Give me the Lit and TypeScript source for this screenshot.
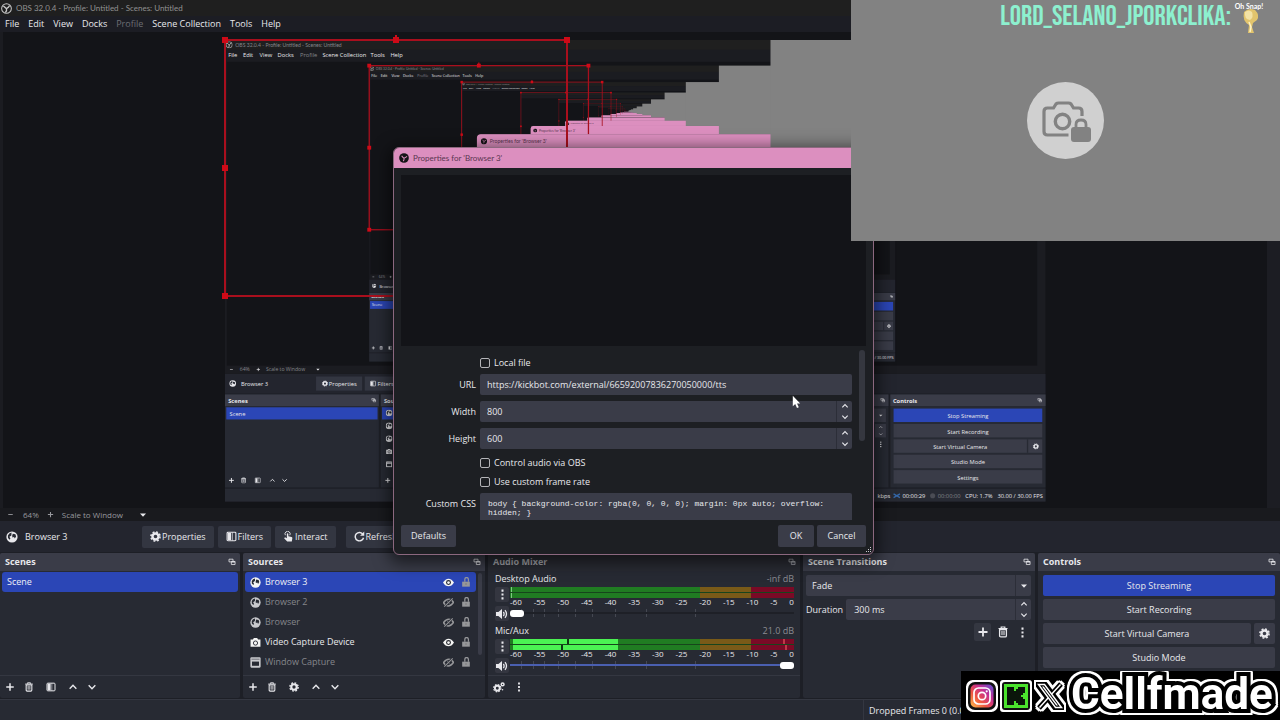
import { LitElement, html, svg, css, nothing } from "lit";
import { customElement } from "lit/decorators.js";
import { styleMap } from "lit/directives/style-map.js";

const glyphs = {
  plus: svg`<path d="M6 1.5v9M1.5 6h9" stroke="currentColor" stroke-width="1.8" fill="none"/>`,
  minus: svg`<path d="M3 6h6" stroke="currentColor" stroke-width="1.2"/>`,
  trash: svg`<path d="M1.5 2.5h9M4.2 2V1h3.6v1" stroke="currentColor" stroke-width="1.2" fill="none"/><path d="M2.6 3.5h6.8v6.2q0 1.2-1.2 1.2H3.8q-1.2 0-1.2-1.2z" fill="none" stroke="currentColor" stroke-width="1.3"/><path d="M4.8 4.8v4.4M6 4.8v4.4M7.2 4.8v4.4" stroke="currentColor" stroke-width=".8"/>`,
  gear: svg`<circle cx="6" cy="6" r="3.3" fill="none" stroke="currentColor" stroke-width="2.6"/><circle cx="6" cy="6" r="5" fill="none" stroke="currentColor" stroke-width="1.7" stroke-dasharray="2.1 1.83"/>`,
  gears: svg`<circle cx="4.3" cy="7.2" r="2.4" fill="none" stroke="currentColor" stroke-width="1.9"/><circle cx="4.3" cy="7.2" r="3.6" fill="none" stroke="currentColor" stroke-width="1.2" stroke-dasharray="1.6 1.23"/><circle cx="9.6" cy="3.4" r="1.4" fill="none" stroke="currentColor" stroke-width="1.5"/><circle cx="9.6" cy="8.8" r=".7" fill="currentColor"/>`,
  filter: svg`<rect x="1.2" y="1.4" width="9.6" height="9.2" rx="1" fill="none" stroke="currentColor" stroke-width="1.2"/><path d="M2 2h3.6v8H2z" fill="currentColor"/><path d="M7 1.5v9" stroke="currentColor" stroke-width=".7"/>`,
  up: svg`<path d="M2 8l4-4 4 4" fill="none" stroke="currentColor" stroke-width="1.7"/>`,
  down: svg`<path d="M2 4l4 4 4-4" fill="none" stroke="currentColor" stroke-width="1.7"/>`,
  caret: svg`<path d="M1.5 3.8h9L6 8.6z" fill="currentColor"/>`,
  dots: svg`<path d="M4.9 .6h2.2v2.4H4.9zM4.9 4.8h2.2v2.4H4.9zM4.9 9h2.2v2.4H4.9z" fill="currentColor"/>`,
  popout: svg`<path d="M1.5 1.8h6v4h-6z" fill="none" stroke="currentColor" stroke-width="1.2"/><path d="M5 5.2h5.6v4.6H5z" fill="#3a3c48" stroke="currentColor" stroke-width="1.2"/><path d="M5 5.8h5.6" stroke="currentColor" stroke-width="1.8"/>`,
  eye: svg`<path d="M0 6Q2.6 1.8 6 1.8T12 6Q9.4 10.2 6 10.2T0 6z" fill="currentColor"/><circle cx="6" cy="6" r="2.7" fill="#25272f"/><circle cx="6" cy="6" r="1.5" fill="currentColor"/>`,
  hidden: svg`<path d="M.6 6.2Q3 2.4 6.4 2.4T11.4 6Q9 9.8 5.8 9.8T.6 6.2z" fill="none" stroke="currentColor" stroke-width="1.7"/><circle cx="6" cy="6" r="1.6" fill="currentColor"/><path d="M1.4 11L10.6 1" stroke="#272a33" stroke-width="2.4"/><path d="M1.4 10.6L10.6 1.4" stroke="currentColor" stroke-width="1.1"/>`,
  unlock: svg`<path d="M1.4 5.6h9.2v6H1.4z" fill="currentColor"/><path d="M4.6 5.6V3Q4.6.6 6.7.6T8.9 3v2.6" fill="none" stroke="currentColor" stroke-width="1.5"/><circle cx="6" cy="8.4" r=".9" fill="#777"/>`,
  globe: svg`<circle cx="6" cy="6" r="5.6" fill="currentColor"/><path d="M5.5 1.6Q3 2 1.9 4.4L2 7l1.7 1.8.7-1.4L3.4 5.8l2-1.4zM6.8 2.8l2.6.4.7 2.2-1.3 2.2-.8-1.6-1.6.6-.2-2z" fill="#272a33"/>`,
  camera: svg`<path d="M.6 2.8h2.6L4.2 1.2h3.6l1 1.6h2.6v7.8H.6z" fill="currentColor"/><circle cx="6" cy="6.6" r="2.3" fill="none" stroke="#272a33" stroke-width="1"/>`,
  window: svg`<rect x=".4" y=".4" width="11.2" height="11.2" rx="1.2" fill="currentColor"/><path d="M2.2 5h7.600v4.6H2.2z" fill="#272a33"/><path d="M1.600 2.400h8.800" stroke="#272a33" stroke-width=".6"/>`,
  touch: svg`<path d="M4.6 11.4L1.2 7.8l1-1 2 1V3.4q0-1 .8-1t.8 1v2.4l3.6.8q1 .3.8 1.4l-.6 3.4z" fill="currentColor"/><path d="M2.6 4.6A2.8 2.8 0 1 1 7.4 4.6" fill="none" stroke="currentColor" stroke-width="1"/>`,
  refresh: svg`<path d="M9.8 3.6A4.6 4.6 0 1 0 10.4 7.4" fill="none" stroke="currentColor" stroke-width="1.6"/><path d="M11.2.6v4.6H6.6z" fill="currentColor"/>`,
  speaker: svg`<path d="M0 4h2.4L6 1v10L2.4 8H0z" fill="currentColor"/><path d="M7.4 3.8Q8.8 6 7.4 8.2M9 2.2Q12 6 9 9.8" fill="none" stroke="currentColor" stroke-width="1.3"/>`,
};
type Glyph = keyof typeof glyphs;

const icon = (name: Glyph, size = 10) =>
  html`<svg class="icon" width=${size} height=${size} viewBox="0 0 12 12" aria-hidden="true">${glyphs[name]}</svg>`;

const ringMark = svg`
  <circle cx="6" cy="6" r="5.3" fill="none" stroke="#c8c8c8" stroke-width="1.1"/>
  <path d="M6 6.2Q4.2 4.6 2.6 3.2M6 6.2Q8.4 5 9.4 2.8M6 6.2Q6.6 8.4 4.8 10.4" fill="none" stroke="#c8c8c8" stroke-width="1.5"/>`;
const solidMark = svg`
  <circle cx="6" cy="6" r="5.8" fill="#141416"/>
  <path d="M6 6.2Q4.200 5.200 3.200 3.200M6 6.200Q8.200 5.400 9.600 4M6 6.200Q6.400 8.400 5 9.800" fill="none" stroke="#d98fbd" stroke-width="1.3"/>`;

/** Recursive capture of the desktop shown in the main preview. */
@customElement("scene-preview")
class ScenePreview extends LitElement {
  static styles = css`
    :host { display: block; min-height: 0; background: #131418; }
    .canvas { display: block; width: 100%; height: 100%; }
    .ui { font-family: "Open Sans", "Noto Sans", sans-serif; font-size: 9px; fill: #e8e8ec; }
    .title { font-family: Lato, sans-serif; font-size: 8px; }
    .bold { font-weight: 700; }
    .small { font-size: 8px; }
    .dim { fill: #85868b; }
    .onpink { fill: #5a3650; }
    .mid { text-anchor: middle; }
  `;

  place(name: Glyph, x: number, y: number, s = 10) {
    return svg`<svg x=${x - s / 2} y=${y - s / 2} width=${s} height=${s} viewBox="0 0 12 12" color="#e8e8ec">${glyphs[name]}</svg>`;
  }

  selection() {
    const handles = [[225, 40], [396, 40], [567, 40], [225, 168], [225, 296], [396, 296]];
    return svg`<rect x="225" y="40" width="342" height="256" fill="none" stroke="#a90f1d" stroke-width="2"/>
      <path d="M396 40v-5" stroke="#c8101c" stroke-width="2"/>
      ${handles.map(([x, y]) => svg`<rect x=${x - 3} y=${y - 3} width="6" height="6" fill="#cf0a17"/>`)}`;
  }

  desktop(depth: number): unknown {
    const menu: [string, number][] = [["File", 5], ["Edit", 28], ["View", 54], ["Docks", 82], ["Profile", 117], ["Scene Collection", 152], ["Tools", 227], ["Help", 258]];
    const docks: [number, number][] = [[0, 240], [243, 242], [488, 312], [803, 232], [1038, 242]];
    const detailed = depth < 4;
    return svg`
      <rect width="1280" height="720" fill="#1b1c21"/>
      <rect width="1280" height="15" fill="#1f1f1f"/>
      ${detailed ? svg`<svg x="1" y="2" width="11" height="11" viewBox="0 0 12 12">${ringMark}</svg>
      <text class="dim title" x="16" y="11">OBS 32.0.4 - Profile: Untitled - Scenes: Untitled</text>
      ${menu.map(([t, x]) => svg`<text class=${t === "Profile" ? "dim" : ""} x=${x} y="27">${t}</text>`)}` : nothing}
      <rect x="3" y="34" width="1264" height="474" fill="#131418"/>
      ${this.nested(depth + 1)}
      ${this.selection()}
      <rect y="521" width="1280" height="31" fill="#23252e"/>
      <rect y="552" width="1280" height="168" fill="#1d1f26"/>
      ${docks.map(([x, w]) => svg`<rect x=${x} y="553" width=${w} height="145" fill="#272a33"/><rect x=${x} y="553" width=${w} height="18" fill="#3a3c48"/>`)}
      <rect y="700" width="1280" height="20" fill="#272a33"/>
      <rect x="2" y="573" width="236" height="19" fill="#2b46b6"/>
      <rect x="245" y="573" width="230" height="19" fill="#2b46b6"/>
      <rect x="1043" y="575" width="232" height="21" fill="#2b46b6"/>
      ${[599, 623, 647, 671].map((y) => svg`<rect x="1043" y=${y} width="232" height="21" fill="#3a3c48"/>`)}
      <rect x="806" y="575" width="225" height="21" fill="#3a3c48"/>
      <rect x="1014" y="599" width="17" height="21" fill="#3a3c48"/>
      ${depth < 3 ? svg`
        <text class="dim small" x="23" y="517">64%</text><text class="dim small" x="64" y="517">Scale to Window</text>
        ${this.place("minus", 10, 514, 9)}${this.place("plus", 52, 514, 7)}${this.place("caret", 145, 514, 7)}
        ${this.place("globe", 12, 536, 11)}<text x="25" y="540">Browser 3</text>
        <rect x="142" y="525" width="72" height="22" fill="#333641"/>${this.place("gear", 156, 536)}<text x="162" y="540">Properties</text>
        <rect x="218" y="525" width="54" height="22" fill="#333641"/>${this.place("filter", 231, 536)}<text x="238" y="540">Filters</text>
        <text class="bold" x="5" y="566">Scenes</text><text x="7" y="586">Scene</text>
        <text class="bold" x="248" y="566">Sources</text>
        ${this.place("popout", 232, 562, 8)}${this.place("popout", 1026, 562, 8)}${this.place("popout", 1271, 562, 8)}
        ${this.place("globe", 256, 582, 11)}${this.place("globe", 256, 602, 11)}${this.place("globe", 256, 622, 11)}
        ${this.place("camera", 256, 642)}${this.place("window", 256, 662)}
        ${this.place("plus", 10, 687)}${this.place("trash", 29, 687)}${this.place("filter", 51, 687)}${this.place("up", 74, 687)}${this.place("down", 93, 687)}
        ${this.place("plus", 254, 687)}
        ${this.place("caret", 1023, 586, 7)}${this.place("up", 1023, 604, 7)}${this.place("down", 1023, 615, 7)}${this.place("dots", 1023, 631)}
        <text class="bold" x="1042" y="566">Controls</text>
        <g class="mid"><text x="1159" y="590">Stop Streaming</text><text x="1159" y="614">Start Recording</text>
        <text x="1147" y="638">Start Virtual Camera</text><text x="1159" y="662">Studio Mode</text><text x="1159" y="686">Settings</text></g>
        <path d="M1252 623v21" stroke="#272a33" stroke-width="2"/>${this.place("gear", 1265, 634)}
        <text x="1018" y="715">kbps</text><path d="M1043 708l10 6M1043 714l10-6" stroke="#3567a8" stroke-width="2"/>
        <text x="1057" y="715">00:00:29</text><circle cx="1104" cy="711" r="4" fill="#4a4c54"/><text class="dim" x="1112" y="715">00:00:00</text>
        <text x="1155" y="715">CPU: 1.7%</text><text x="1205" y="715">30.00 / 30.00 FPS</text>` : nothing}
      <path d="M394 555V153q0-5 5-5h475v407z" fill="#1c1d22" stroke="#7b5d72" stroke-width="1.5"/>
      <path d="M393 168v-15q0-6 6-6h475v21z" fill="#dc8fbf"/>
      ${detailed ? svg`<svg x="399" y="153" width="10" height="10" viewBox="0 0 12 12">${solidMark}</svg>
      <text class="title onpink" x="413" y="161">Properties for 'Browser 3'</text>` : nothing}
      <rect x="851" width="429" height="241" fill="#828282"/>`;
  }

  nested(depth: number): unknown {
    return depth > 11 ? nothing : svg`<g transform="translate(225 40) scale(.641)">${this.desktop(depth)}</g>`;
  }

  render() {
    return html`<svg class="canvas" viewBox="0 32 1280 476" role="img" aria-label="Scene preview">
      <g class="ui">
        <rect y="32" width="3" height="476" fill="#1b1c21"/>
        <rect x="1267" y="32" width="13" height="476" fill="#1c1d23"/>
        ${this.nested(1)}
        ${this.selection()}
      </g>
    </svg>`;
  }
}

/** Camera placeholder and chat line laid over the stream. */
@customElement("camera-overlay")
class CameraOverlay extends LitElement {
  static styles = css`
    :host { display: flex; flex-direction: column; background: #828282; }
    .chat { display: flex; justify-content: flex-end; align-items: center; gap: 4px; height: 34px; padding-right: 15px; }
    .user { color: #8df0cf; font: 400 28px/34px "Bebas Neue", "Oswald", "Roboto Condensed", "Liberation Sans Narrow", sans-serif; white-space: nowrap; }
    .emote { display: block; overflow: visible; }
    .note { font: 700 7px Lato, sans-serif; fill: #fff; text-anchor: middle; }
    .badge { display: block; margin: 48px auto 0; }
  `;
  render() {
    return html`
      <div class="chat">
        <span class="user">LORD_SELANO_JPORKCLIKA:</span>
        <svg class="emote" width="30" height="34" viewBox="0 0 30 34">
          <path d="M9 12q5-5 11-2 5 5 2 10l-4 3-1 4 2 6h-6l1-8q-7-4-5-13z" fill="#e2c46d"/>
          <path d="M10 12q4-3 7 0 2 5-2 8-6-1-5-8z" fill="#f3e2a6"/>
          <path d="M14 22l2 5-1 5" stroke="#fff3c4" stroke-width="1.5" fill="none"/>
          <text class="note" x="14" y="9">Oh Snap!</text>
        </svg>
      </div>
      <svg class="badge" width="78" height="78" viewBox="0 0 78 78" role="img" aria-label="Camera locked">
        <circle cx="38.500" cy="38.500" r="38.500" fill="#d0d0d0"/>
        <path d="M41.500 53H20.500q-3.500 0-3.500-3.500V29.500q0-3.500 3.500-3.500h6l2.500-4q1-1 2.500-1h10q1.500 0 2.500 1l2.500 4h5q3.500 0 3.500 3.500V34" fill="none" stroke="#828282" stroke-width="3.200"/>
        <circle cx="35.500" cy="39.500" r="7.200" fill="none" stroke="#828282" stroke-width="3.400"/>
        <path d="M47 45h14q3 0 3 3v9q0 3-3 3h-14q-3 0-3-3v-9q0-3 3-3z" fill="#828282"/>
        <path d="M49 46v-3.500q0-4.500 5-4.500t5 4.500V46" fill="none" stroke="#828282" stroke-width="2.800"/>
      </svg>`;
  }
}

/** Social handles strip. */
@customElement("social-banner")
class SocialBanner extends LitElement {
  static styles = css`
    :host { display: flex; align-items: center; gap: 6px; background: #000; padding-left: 7px; }
    .mark, .name { flex: none; filter: drop-shadow(2px 0 #fff) drop-shadow(-2px 0 #fff) drop-shadow(0 2px #fff) drop-shadow(0 -2px #fff); }
    .clip { display: flex; align-items: center; flex: 1; align-self: stretch; overflow: hidden; padding-left: 7px; margin-left: -6px; }
    .name { color: #fff; font: 700 44px/44px Roboto, sans-serif; -webkit-text-stroke: 8px #000; paint-order: stroke fill; margin-bottom: 4px; }
  `;
  render() {
    return html`
      <svg class="mark" width="28" height="28" viewBox="0 0 28 28" role="img" aria-label="Instagram">
        <defs><linearGradient id="ig" x1="0" y1="1" x2="1" y2="0"><stop offset="0" stop-color="#fdc04f"/><stop offset=".35" stop-color="#f0563f"/><stop offset=".65" stop-color="#c52f92"/><stop offset="1" stop-color="#5a50d6"/></linearGradient></defs>
        <rect width="28" height="28" rx="7" fill="#111"/><rect x="2.500" y="2.500" width="23" height="23" rx="5" fill="url(#ig)"/>
        <rect x="6" y="6" width="16" height="16" rx="4.500" fill="none" stroke="#fff" stroke-width="1.700"/><circle cx="14" cy="14" r="3.700" fill="none" stroke="#fff" stroke-width="1.700"/><circle cx="18.700" cy="9.300" r="1.100" fill="#fff"/>
      </svg>
      <svg class="mark" width="28" height="28" viewBox="0 0 28 28" role="img" aria-label="Kick">
        <rect width="28" height="28" rx="3" fill="#111"/><rect x="2" y="2" width="24" height="24" fill="#4be32d"/>
        <path d="M5 5h7v4h2V7h2V5h7v6h-2v2h-2v2h2v2h2v6h-7v-2h-2v-2h-2v4H5z" fill="#0b160b"/>
      </svg>
      <svg class="mark" width="28" height="28" viewBox="0 0 28 28" role="img" aria-label="X">
        <path d="M1 2h8l18 24h-8zM25 2L15.500 12.500M3 26l9.500-10.500" fill="none" stroke="#000" stroke-width="5"/>
        <path d="M2.500 2.500h6l17 23h-6zM24.500 2.500L15.500 12.200M3.500 25.500l9-10" fill="none" stroke="#fff" stroke-width="1.500"/>
      </svg>
      <div class="clip"><span class="name">Cellfmade</span></div>`;
  }
}

@customElement("app-root")
class AppRoot extends LitElement {
  static styles = css`
    :host { display: flex; flex-direction: column; position: relative; height: 100vh; overflow: hidden; background: #1d1f26; color: #e8e8ec; font: 9px/12px "Open Sans", "Noto Sans", sans-serif; }
    * { box-sizing: border-box; }
    button, input, select, textarea { font: inherit; color: inherit; border: 0; margin: 0; padding: 0; background: none; border-radius: 2px; }
    button { display: flex; align-items: center; justify-content: center; gap: 1px; white-space: nowrap; }
    .icon { display: block; flex: none; }
    .titlebar { display: flex; align-items: center; gap: 4px; height: 16px; padding-left: 1px; background: #1f1f1f; color: #919191; font: 8px/12px Lato, sans-serif; }
    .menubar { display: flex; align-items: center; gap: 9px; height: 16px; padding-left: 5px; background: #1c1d24; }
    .menubar button:disabled { color: #6c6d73; }
    .preview { flex: 1; }
    .zoombar { display: flex; align-items: center; height: 13px; padding-left: 6px; gap: 8px; background: #191a1e; color: #97989d; font-size: 8px; }
    .scale { gap: 16px; color: inherit; }
    .caret { color: #e8e8ec; }
    .sourcebar { display: flex; align-items: center; height: 31px; padding-left: 6px; background: #23252e; gap: 4px; }
    .current { display: flex; align-items: center; gap: 7px; width: 132px; }
    .sourcebar button { height: 22px; background: #333641; }
    .tool { padding: 0 8px; }
    .refresh { margin-left: 6px; }
    .docks { display: grid; grid-template-columns: 240fr 242fr 312fr 232fr 242fr; gap: 3px; height: 146px; padding-top: 1px; }
    .dock { display: flex; flex-direction: column; min-width: 0; background: #272a33; border-radius: 2px; }
    .head { display: flex; align-items: center; justify-content: space-between; height: 18px; padding: 0 4px 0 5px; background: #3a3c48; border-radius: 2px 2px 0 0; }
    .head h2 { margin: 0; font: inherit; font-weight: 700; }
    .shade { background: #292b33; color: #a2a3a8; }
    .list { flex: 1; min-height: 0; margin: 0; padding: 1px 2px; list-style: none; }
    .item { display: flex; align-items: center; height: 20px; padding: 0 5px; gap: 4px; border-radius: 3px; }
    .item .label { flex: 1; }
    .item.off { color: #85868b; }
    .item.picked { background: #2b46b6; color: #f0f0f6; }
    .sources { display: flex; flex: 1; min-height: 0; }
    .eyes { color: #f4f4f4; }
    .off .eyes, .locks { color: #96979a; }
    .kind { color: #f4f4f4; display: flex; }
    .off .kind { color: #c8c9cd; }
    .locks { margin-left: 3px; }
    .thumb { width: 4px; height: 82px; margin: 2px 3px 0 0; background: #3a3c48; border-radius: 2px; }
    .foot { display: flex; align-items: center; gap: 9px; height: 23px; padding: 0 5px; border-top: 1px solid #343741; }
    .foot button:nth-child(3), .foot button:nth-child(4) { margin-left: 3px; }
    .mixer { flex: 1; padding: 0 6px 0 7px; }
    .channel { display: grid; grid-template-columns: 14px 1fr; column-gap: 1px; height: 52px; padding-top: 2px; align-content: start; }
    .caption { grid-column: 1 / 3; display: flex; justify-content: space-between; height: 14px; }
    .db { color: #8b8c92; }
    .mini { width: 14px; height: 15px; background: #343640; }
    .bars { display: grid; grid-template-rows: 5px 5px; row-gap: 1px; height: 11px; background: #17451c; }
    .bar { position: relative; background: linear-gradient(90deg, #207c22 67%, #795a18 67% 85%, #7a0a26 85%); }
    .level { height: 100%; margin-left: 3px; background: #4bf253; }
    .idle { width: 1px; height: 100%; margin-left: 1px; background: #7fc884; }
    .peak { position: absolute; top: 0; width: 2px; height: 100%; background: #0c3a12; }
    .clip { position: absolute; top: 0; width: 2px; height: 100%; background: #c03848; }
    .ticks { display: flex; justify-content: space-between; font-size: 8px; line-height: 8px; height: 8px; }
    .slide { position: relative; height: 14px; }
    .notch { position: absolute; top: 3px; width: 1px; height: 8px; background: #454852; }
    .volume { position: relative; display: block; appearance: none; width: 100%; height: 14px; background: linear-gradient(var(--track), var(--track)) center / 100% 2px no-repeat; }
    .volume::-webkit-slider-thumb { appearance: none; width: 14px; height: 7px; border-radius: 3px; background: #fff; }
    .quiet { --track: #1e2027; }
    .loud { --track: #4a5fb0; }
    .stack { display: flex; flex-direction: column; gap: 3px; padding: 4px 4px 0 3px; }
    .controls { padding: 4px 5px 0; }
    .controls button, .field { height: 21px; background: #3a3c48; }
    .controls .live { background: #2b46b6; }
    .split { display: flex; gap: 3px; }
    .split button:first-child { flex: 1; }
    .split button:last-child { width: 21px; }
    .field { display: flex; align-items: stretch; min-width: 0; border-radius: 2px; }
    .field input { flex: 1; min-width: 0; width: 0; padding: 0 8px; appearance: textfield; }
    .field input::-webkit-inner-spin-button { appearance: none; }
    .field select { flex: 1; padding: 0 6px; appearance: none; }
    .steps { display: flex; flex-direction: column; width: 16px; border-left: 1px solid #2c2e38; }
    .steps button { flex: 1; height: auto; background: none; }
    .pick { display: flex; align-items: center; justify-content: center; width: 16px; border-left: 1px solid #2c2e38; }
    .line { display: flex; align-items: center; gap: 3px; }
    .line .field { flex: 1; }
    .actions { display: flex; justify-content: flex-end; gap: 3px; }
    .actions button { width: 17px; height: 18px; }
    .actions .lit { background: #343741; }
    .status { display: flex; justify-content: flex-end; height: 21px; margin-top: 1px; background: #272a33; border-top: 1px solid #343741; }
    .dropped { width: 417px; padding: 5px; border-left: 1px solid #343741; white-space: nowrap; }

    .dialog { position: absolute; left: 393px; top: 147px; width: 481px; display: flex; flex-direction: column; background: #1d1f23; border: 1px solid #8c687f; border-radius: 6px; box-shadow: 0 4px 16px 4px rgba(0, 0, 0, .55); overflow: hidden; }
    .caption-bar { display: flex; align-items: center; gap: 4px; height: 20px; padding-left: 5px; background: #dc8fbf; color: #5a3650; font: 8px/12px Lato, sans-serif; }
    .caption-bar h1 { margin: 0; font: inherit; }
    .render { height: 171px; margin: 7px 7px 0; background: #131418; }
    .scroll { display: flex; height: 174px; padding: 0 7px; overflow: hidden; }
    .form { flex: 1; padding-top: 9px; }
    .row { display: grid; grid-template-columns: 75px 1fr; gap: 4px; align-items: center; margin-bottom: 6px; }
    .row > label { text-align: right; }
    .row .field input { padding: 0 7px; }
    .check { display: flex; align-items: center; gap: 4px; height: 16px; margin: 0 0 3px 79px; }
    .check input { appearance: none; width: 10px; height: 10px; border: 1px solid #b4b4b8; }
    .css { align-items: start; }
    .css label { padding-top: 5px; }
    .css textarea { height: 40px; padding: 6px 8px; background: #3a3c48; resize: none; overflow: hidden; font: 8px/9px "Liberation Mono", monospace; }
    .grip { width: 6px; height: 91px; margin: 4px 1px 0 7px; border-radius: 3px; background: #35373f; }
    .buttons { display: flex; gap: 3px; padding: 5px 7px 7px; }
    .buttons button { height: 22px; background: #3a3c48; }
    .defaults { width: 55px; margin-right: auto; }
    .ok { width: 36px; }
    .cancel { width: 49px; }
    .corner { position: absolute; right: 1px; bottom: 1px; }
    .pointer { position: absolute; left: 792px; top: 395px; }
    .camera { position: absolute; right: 0; top: 0; width: 429px; height: 241px; }
    .social { position: absolute; right: 0; bottom: 0; width: 319px; height: 49px; box-sizing: border-box; }
  `;

  dock(title: string, body: unknown, shade = false) {
    return html`<section class="dock"><div class="head ${shade ? "shade" : ""}"><h2>${title}</h2>${icon("popout", 8)}</div>${body}</section>`;
  }

  source(name: string, kind: Glyph, on: boolean, picked = false) {
    return html`<li class="item ${on ? "" : "off"} ${picked ? "picked" : ""}">
      <span class="kind">${icon(kind, 11)}</span><span class="label">${name}</span>
      <span class="eyes">${icon(on ? "eye" : "hidden", 11)}</span><span class="locks">${icon("unlock", 10)}</span></li>`;
  }

  channel(name: string, db: string, level: number, volume: number, peaks: number[], clips: number[]) {
    const marks = [-60, -55, -50, -45, -40, -35, -30, -25, -20, -15, -10, -5, 0];
    const notches = [4, 8, 12, 17, 23, 29, 37, 48, 65];
    const at = (p: number) => styleMap({ left: `${p}%` });
    return html`<div class="channel">
      <div class="caption"><span>${name}</span><span class="db">${db}</span></div>
      <button class="mini" aria-label="${name} options">${icon("dots", 11)}</button>
      <div><div class="bars">${[0, 1].map((i) => html`<div class="bar">
        ${level ? html`<div class="level" style=${styleMap({ width: `${level}%` })}></div><i class="peak" style=${at(peaks[i])}></i><i class="clip" style=${at(clips[i])}></i>` : html`<div class="idle"></div>`}</div>`)}</div>
      <div class="ticks">${marks.map((m) => html`<span>${m}</span>`)}</div></div>
      <button class="mini" aria-label="Mute ${name}">${icon("speaker", 12)}</button>
      <div class="slide">${notches.map((n) => html`<i class="notch" style=${at(n)}></i>`)}
        <input class="volume ${volume ? "loud" : "quiet"}" type="range" aria-label="${name} volume" .value=${String(volume)}></div>
    </div>`;
  }

  steps() {
    return html`<div class="steps"><button type="button" aria-label="Increase">${icon("up", 8)}</button><button type="button" aria-label="Decrease">${icon("down", 8)}</button></div>`;
  }

  render() {
    return html`
      <header class="titlebar"><svg width="11" height="11" viewBox="0 0 12 12" aria-hidden="true">${ringMark}</svg><span>OBS 32.0.4 - Profile: Untitled - Scenes: Untitled</span></header>
      <nav class="menubar">${["File", "Edit", "View", "Docks", "Profile", "Scene Collection", "Tools", "Help"].map((m) => html`<button ?disabled=${m === "Profile"}>${m}</button>`)}</nav>
      <scene-preview class="preview"></scene-preview>
      <div class="zoombar"><button aria-label="Zoom out">${icon("minus", 9)}</button><span>64%</span><button aria-label="Zoom in">${icon("plus", 7)}</button><button class="scale">Scale to Window <span class="caret">${icon("caret", 8)}</span></button></div>
      <div class="sourcebar">
        <div class="current">${icon("globe", 12)}<span>Browser 3</span></div>
        <button class="tool">${icon("gear", 11)}Properties</button><button class="tool">${icon("filter", 11)}Filters</button><button class="tool">${icon("touch", 11)}Interact</button>
        <button class="tool refresh">${icon("refresh", 11)}Refresh</button>
      </div>
      <main class="docks">
        ${this.dock("Scenes", html`<ul class="list"><li class="item picked">Scene</li></ul>
          <div class="foot">${(["plus", "trash", "filter", "up", "down"] as Glyph[]).map((g) => html`<button aria-label=${g}>${icon(g)}</button>`)}</div>`)}
        ${this.dock("Sources", html`<div class="sources"><ul class="list">
          ${this.source("Browser 3", "globe", true, true)}${this.source("Browser 2", "globe", false)}${this.source("Browser", "globe", false)}${this.source("Video Capture Device", "camera", true)}${this.source("Window Capture", "window", false)}</ul><div class="thumb"></div></div>
          <div class="foot">${(["plus", "trash", "gear", "up", "down"] as Glyph[]).map((g) => html`<button aria-label=${g}>${icon(g)}</button>`)}</div>`)}
        ${this.dock("Audio Mixer", html`<div class="mixer">${this.channel("Desktop Audio", "-inf dB", 0, 0, [], [])}${this.channel("Mic/Aux", "21.0 dB", 37, 100, [20, 18], [96, 97])}</div>
          <div class="foot"><button aria-label="Audio settings">${icon("gears", 12)}</button><button aria-label="Mixer menu">${icon("dots")}</button></div>`, true)}
        ${this.dock("Scene Transitions", html`<div class="stack">
          <div class="field"><select aria-label="Transition"><option>Fade</option></select><span class="pick">${icon("caret", 8)}</span></div>
          <div class="line"><label for="duration">Duration</label><div class="field"><input id="duration" value="300 ms">${this.steps()}</div></div>
          <div class="actions"><button class="lit" aria-label="Add transition">${icon("plus", 12)}</button><button aria-label="Remove transition">${icon("trash", 12)}</button><button aria-label="Transition menu">${icon("dots", 11)}</button></div>
        </div>`)}
        ${this.dock("Controls", html`<div class="stack controls"><button class="live">Stop Streaming</button><button>Start Recording</button>
          <div class="split"><button>Start Virtual Camera</button><button aria-label="Virtual camera settings">${icon("gear", 11)}</button></div><button>Studio Mode</button></div>`)}
      </main>
      <footer class="status"><span class="dropped">Dropped Frames 0 (0.0%)</span></footer>

      <section class="dialog" role="dialog" aria-labelledby="dialog-title">
        <div class="caption-bar"><svg width="10" height="10" viewBox="0 0 12 12" aria-hidden="true">${solidMark}</svg><h1 id="dialog-title">Properties for 'Browser 3'</h1></div>
        <div class="render"></div>
        <div class="scroll"><form class="form">
          <label class="check"><input type="checkbox">Local file</label>
          <div class="row"><label for="url">URL</label><div class="field"><input id="url" value="https://kickbot.com/external/66592007836270050000/tts"></div></div>
          <div class="row"><label for="width">Width</label><div class="field"><input id="width" type="number" value="800">${this.steps()}</div></div>
          <div class="row"><label for="height">Height</label><div class="field"><input id="height" type="number" value="600">${this.steps()}</div></div>
          <label class="check"><input type="checkbox">Control audio via OBS</label>
          <label class="check"><input type="checkbox">Use custom frame rate</label>
          <div class="row css"><label for="css">Custom CSS</label><textarea id="css" .value=${"body { background-color: rgba(0, 0, 0, 0); margin: 0px auto; overflow: hidden; }"}></textarea></div>
        </form><div class="grip"></div></div>
        <div class="buttons"><button class="defaults">Defaults</button><button class="ok">OK</button><button class="cancel">Cancel</button></div>
        <svg class="corner" width="7" height="7" viewBox="0 0 7 7" aria-hidden="true"><path d="M5 1h1v1H5zM3 3h1v1H3zM5 3h1v1H5zM1 5h1v1H1zM3 5h1v1H3zM5 5h1v1H5z" fill="#c9c9cd"/></svg>
      </section>
      <svg class="pointer" width="9" height="14" viewBox="0 0 9 14" aria-hidden="true"><path d="M.8.8v10.400l2.400-2.200 1.800 4 1.800-.8L5 8.400h3.200z" fill="#fff"/></svg>
      <camera-overlay class="camera"></camera-overlay>
      <social-banner class="social"></social-banner>`;
  }
}
